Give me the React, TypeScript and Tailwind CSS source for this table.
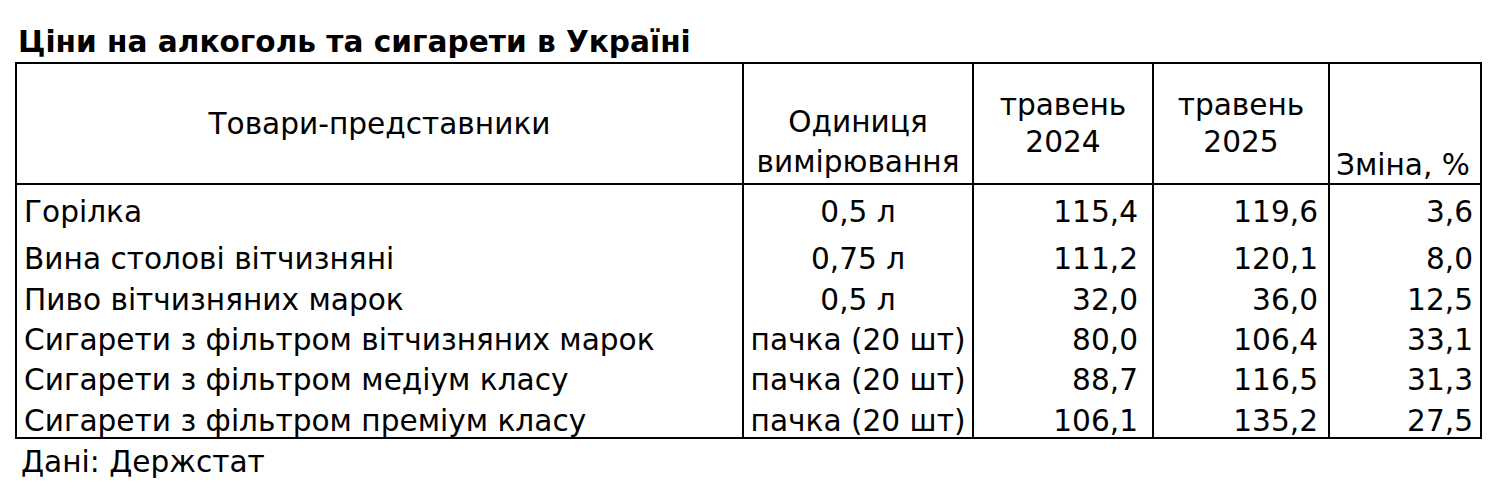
const rows = [
  ['Горілка', '0,5 л', '115,4', '119,6', '3,6'],
  ['Вина столові вітчизняні', '0,75 л', '111,2', '120,1', '8,0'],
  ['Пиво вітчизняних марок', '0,5 л', '32,0', '36,0', '12,5'],
  ['Сигарети з фільтром вітчизняних марок', 'пачка (20 шт)', '80,0', '106,4', '33,1'],
  ['Сигарети з фільтром медіум класу', 'пачка (20 шт)', '88,7', '116,5', '31,3'],
  ['Сигарети з фільтром преміум класу', 'пачка (20 шт)', '106,1', '135,2', '27,5'],
];

// row height + top padding of its cells
const rowH = ['h-[52px]', 'h-[44px]', 'h-[40px]', 'h-[41px]', 'h-[39px]', 'h-[37px]'];
const rowPad = ['pt-[4px]', 'pt-[3px]', 'pt-[1px]', 'pt-[1px]', 'pt-[1px]', 'pt-[7px]'];

export default function App() {
  return (
    <div className="h-[496px] w-[1500px] bg-white pl-[15px] pt-[23px] font-['DejaVu_Sans',sans-serif] text-black">
      <h1 className="pl-[3px] text-[29.6px] font-bold leading-[39px]">Ціни на алкоголь та сигарети в Україні</h1>
      <table className="table-fixed border-collapse border-2 border-black text-[29.6px] leading-none">
        <colgroup>
          <col className="w-[727px]" />
          <col className="w-[230px]" />
          <col className="w-[180px]" />
          <col className="w-[176px]" />
          <col className="w-[152px]" />
        </colgroup>
        <thead>
          <tr className="h-[121px] border-b-2 border-black">
            <th className="border-r-2 border-black pt-[3px] text-center align-middle font-normal">Товари-представники</th>
            <th className="border-r-2 border-black pb-[1px] text-center align-bottom font-normal leading-[40px]">
              Одиниця
              <br />
              вимірювання
            </th>
            <th className="border-r-2 border-black pt-[1px] text-center align-middle font-normal leading-[37px]">
              травень
              <br />
              2024
            </th>
            <th className="border-r-2 border-black pt-[1px] text-center align-middle font-normal leading-[37px]">
              травень
              <br />
              2025
            </th>
            <th className="pb-[2px] pl-[6px] text-left align-bottom font-normal">Зміна, %</th>
          </tr>
        </thead>
        <tbody>
          {rows.map((r, i) => (
            <tr key={r[0]} className={rowH[i]}>
              <td className={`border-r-2 border-black pl-[7px] text-left ${rowPad[i]}`}>{r[0]}</td>
              <td className={`border-r-2 border-black text-center ${rowPad[i]}`}>{r[1]}</td>
              <td className={`border-r-2 border-black pr-[14px] text-right ${rowPad[i]}`}>{r[2]}</td>
              <td className={`border-r-2 border-black pr-[10px] text-right ${rowPad[i]}`}>{r[3]}</td>
              <td className={`pr-[7px] text-right ${rowPad[i]}`}>{r[4]}</td>
            </tr>
          ))}
        </tbody>
      </table>
      <div className="pl-[6px] pt-[9px] text-[29.6px] leading-none">Дані: Держстат</div>
    </div>
  );
}
